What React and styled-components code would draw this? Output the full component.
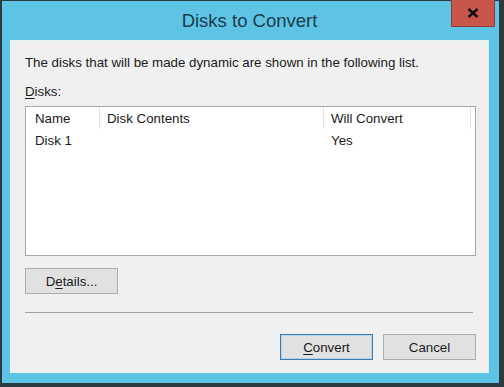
import React from "react";
import styled, { createGlobalStyle } from "styled-components";

const Global = createGlobalStyle`
  html, body {
    margin: 0;
    padding: 0;
    background: #ffffff;
  }
  body {
    font-family: "Liberation Sans", Arial, sans-serif;
  }
`;

const Window = styled.div`
  box-sizing: border-box;
  width: 504px;
  height: 387px;
  border-style: solid;
  border-color: #2b3940;
  border-width: 1px 5px 4px 2px;
  background: #5ec4e6;
  display: flex;
  flex-direction: column;
  padding: 0 10px 10px 8px;
`;

const TitleBar = styled.div`
  position: relative;
  height: 39px;
  display: flex;
  align-items: center;
  justify-content: center;
`;

const Title = styled.div`
  font-family: "Liberation Sans", Arial, sans-serif;
  font-size: 18.5px;
  color: #1d3a4c;
  margin-top: 1px;
`;

const CloseButton = styled.div`
  position: absolute;
  right: -6px;
  top: -1px;
  box-sizing: border-box;
  width: 44px;
  height: 27px;
  background: #c9564b;
  border: 1px solid #8d3b35;
  border-top: none;
  display: flex;
  align-items: center;
  justify-content: center;
`;

const Panel = styled.div`
  flex: 1;
  background: #f0f0f0;
  border: 1px solid #e6f6fb;
  border-right-color: #d8eef6;
  padding: 0 12px 0 14px;
  display: flex;
  flex-direction: column;
  font-size: 13.3px;
  color: #1a1a1a;
`;

const Intro = styled.div`
  margin-top: 14px;
  line-height: 16px;
`;

const Label = styled.div`
  margin-top: 13px;
  line-height: 16px;
`;

const Key = styled.span`
  text-decoration: underline;
  text-underline-offset: 2px;
`;

const ListBox = styled.div`
  margin-top: 6px;
  height: 150px;
  box-sizing: border-box;
  background: #ffffff;
  border: 1px solid #a8a8a8;
`;

const Row = styled.div`
  display: grid;
  grid-template-columns: 74px 224px 147px 1fr;
  height: 22px;
`;

const Cell = styled.div`
  display: flex;
  align-items: center;
  padding-left: ${(p) => (p.$first ? "9px" : "7px")};
  border-right: ${(p) => (p.$head ? "1px solid #e3e3e3" : "none")};
  white-space: nowrap;
`;

const Button = styled.div`
  box-sizing: border-box;
  width: 93px;
  height: 26px;
  background: #e1e1e1;
  border: 1px solid ${(p) => (p.$default ? "#3d7bad" : "#adadad")};
  box-shadow: inset 0 0 0 1px ${(p) => (p.$default ? "#b5d3ec" : "transparent")};
  display: flex;
  align-items: center;
  justify-content: center;
  font-size: 13.3px;
`;

const DetailsRow = styled.div`
  margin-top: 12px;
  display: flex;
`;

const Separator = styled.div`
  margin-top: 18px;
  height: 1px;
  background: #a0a0a0;
  margin-right: 3px;
`;

const Footer = styled.div`
  margin-top: 21px;
  display: flex;
  justify-content: flex-end;
  gap: 10px;
`;

function CloseIcon() {
  return (
    <svg width="12" height="10" viewBox="0 0 12 10">
      <path d="M1.5 1 L10.5 9 M10.5 1 L1.5 9" stroke="#111" strokeWidth="2.6" />
    </svg>
  );
}

export default function App() {
  return (
    <>
      <Global />
      <Window>
        <TitleBar>
          <Title>Disks to Convert</Title>
          <CloseButton>
            <CloseIcon />
          </CloseButton>
        </TitleBar>
        <Panel>
          <Intro>The disks that will be made dynamic are shown in the following list.</Intro>
          <Label>
            <Key>D</Key>isks:
          </Label>
          <ListBox>
            <Row>
              <Cell $head $first>Name</Cell>
              <Cell $head>Disk Contents</Cell>
              <Cell $head>Will Convert</Cell>
              <Cell $head />
            </Row>
            <Row>
              <Cell $first>Disk 1</Cell>
              <Cell />
              <Cell>Yes</Cell>
              <Cell />
            </Row>
          </ListBox>
          <DetailsRow>
            <Button>
              <span>
                D<Key>e</Key>tails...
              </span>
            </Button>
          </DetailsRow>
          <Separator />
          <Footer>
            <Button $default>
              <span>
                <Key>C</Key>onvert
              </span>
            </Button>
            <Button>Cancel</Button>
          </Footer>
        </Panel>
      </Window>
    </>
  );
}
